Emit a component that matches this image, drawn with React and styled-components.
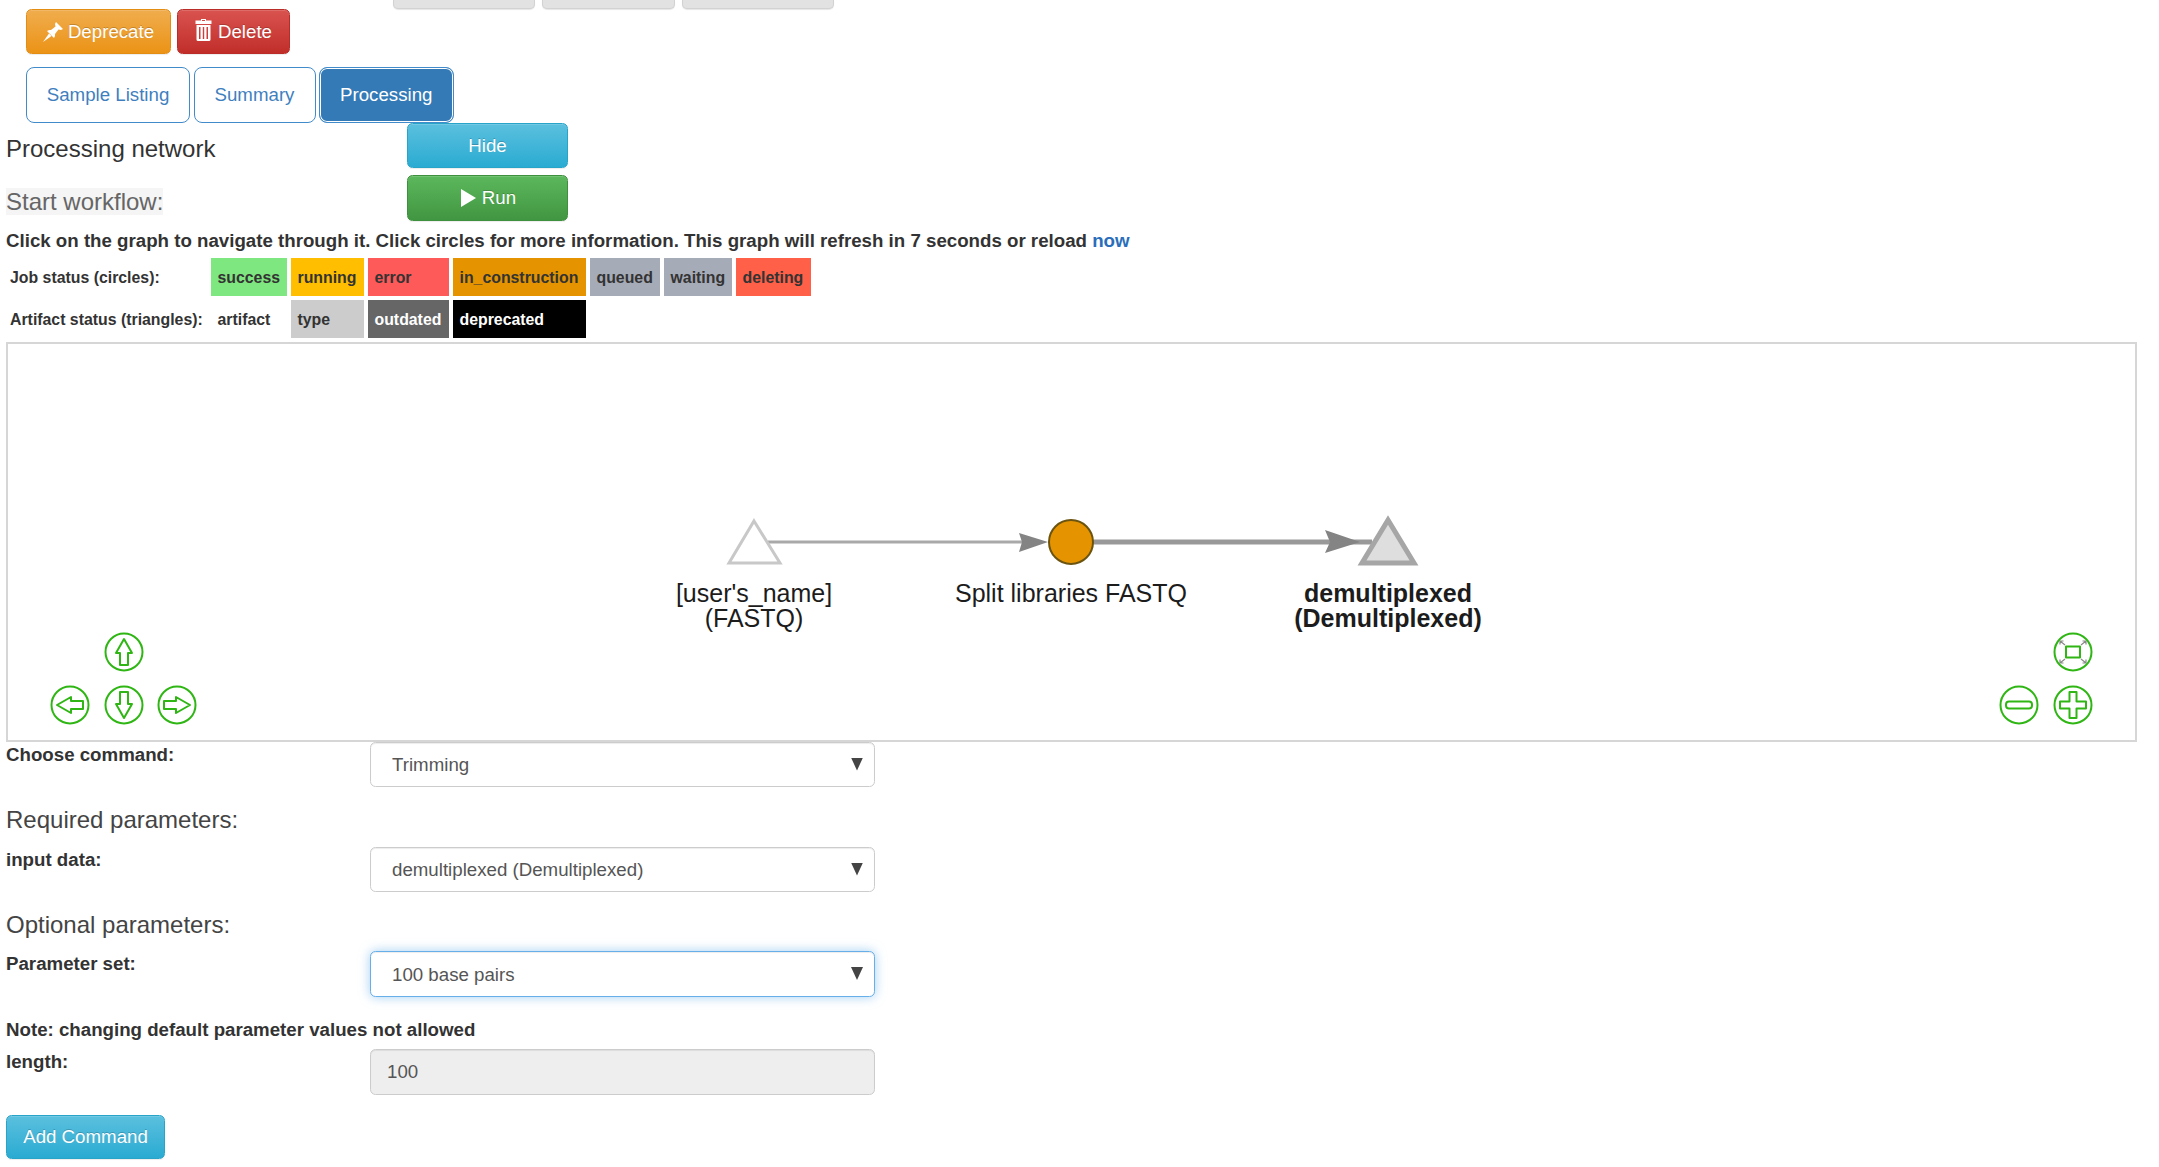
import React from 'react';
import styled, { createGlobalStyle } from 'styled-components';

const GlobalStyle = createGlobalStyle`
  * { box-sizing: border-box; }
  html, body { margin: 0; padding: 0; background: #fff; }
  body {
    font-family: "Liberation Sans", Arial, sans-serif;
    font-size: 18.7px;
    color: #333;
  }
`;

const gradients = {
  warning: ['#f0ad4e', '#eb9316', '#e38d13'],
  danger: ['#d9534f', '#c12e2a', '#b92c28'],
  info: ['#5bc0de', '#2aabd2', '#28a4c9'],
  success: ['#5cb85c', '#419641', '#3e8f3e'],
};

const StubRow = styled.div`
  display: flex;
  gap: 7px;
  height: 9px;
  padding-left: 393px;
`;

const Stub = styled.div`
  width: ${(p) => p.$w}px;
  height: 9px;
  background: #e2e2e2;
  border: 1px solid #d2d2d2;
  border-top: 0;
  border-radius: 0 0 5px 5px;
  box-shadow: 0 1px 1px rgba(0, 0, 0, 0.1);
`;

const Toolbar = styled.div`
  display: flex;
  gap: 6px;
  margin-left: 26px;
`;

const Button = styled.button`
  display: flex;
  align-items: center;
  justify-content: center;
  gap: ${(p) => p.$gap ?? 6}px;
  width: ${(p) => p.$w}px;
  height: ${(p) => p.$h || 45}px;
  padding: 0 0 0 ${(p) => p.$inset || 0}px;
  font: inherit;
  color: #fff;
  text-shadow: 0 -1px 0 rgba(0, 0, 0, 0.2);
  background: linear-gradient(${(p) => gradients[p.$kind][0]}, ${(p) => gradients[p.$kind][1]});
  border: 1px solid ${(p) => gradients[p.$kind][2]};
  border-radius: 5.5px;
  box-shadow: inset 0 1px 0 rgba(255, 255, 255, 0.15), 0 1px 1px rgba(0, 0, 0, 0.075);
`;

const Tabs = styled.div`
  display: flex;
  gap: 3.5px;
  margin: 13px 0 0 26px;
`;

const Tab = styled.a`
  display: flex;
  align-items: center;
  justify-content: center;
  width: ${(p) => p.$w}px;
  height: 56px;
  color: ${(p) => (p.$active ? '#fff' : '#3f7fbe')};
  background: ${(p) => (p.$active ? '#337ab7' : '#fff')};
  border: 1.4px solid #428bca;
  border-radius: 8px;
  box-shadow: ${(p) => (p.$active ? 'inset 0 0 0 1px #fff' : 'none')};
`;

const WorkflowGrid = styled.div`
  display: grid;
  grid-template-columns: 401px 161px;
  grid-template-rows: 45px 46px;
  row-gap: 7px;
  align-items: center;
  padding-left: 6px;
`;

const SectionTitle = styled.div`
  font-size: 24px;
  line-height: 30px;
  color: #333;
`;

const NetworkTitle = styled(SectionTitle)`
  margin-top: 6px;
`;

const StartTitle = styled(SectionTitle)`
  justify-self: start;
  margin-top: 6px;
  line-height: 27px;
  color: #666;
  background: #f5f5f5;
`;

const Instruction = styled.div`
  margin-top: 6px;
  padding-left: 6px;
  font-weight: bold;
  line-height: 27px;

  a {
    color: #2a6ebb;
  }
`;

const Legend = styled.div`
  display: grid;
  grid-template-columns: 201px 76px 73px 81px 133px 70px 68px 75px;
  grid-auto-rows: 38px;
  gap: 4px;
  margin: 4px 0 0 6px;
  font-size: 15.85px;
  font-weight: bold;
`;

const LegendCell = styled.div`
  display: flex;
  align-items: center;
  padding: 1px 0 0 ${(p) => p.$pad ?? 6.5}px;
  white-space: nowrap;
  color: ${(p) => p.$color || '#333'};
  background: ${(p) => p.$bg || 'transparent'};
`;

const GraphBox = styled.div`
  position: relative;
  width: 2131px;
  height: 400px;
  margin: 4px 0 0 6px;
  border: 2px solid #d6d6d6;
`;

const GraphCanvas = styled.svg`
  display: block;
  width: 100%;
  height: 100%;
  font-family: "Liberation Sans", Arial, sans-serif;
  font-size: 25px;
  fill: #1c1c1c;
`;

const NavButton = styled.svg`
  position: absolute;
  left: ${(p) => p.$x - 28}px;
  top: ${(p) => p.$y - 364}px;
  width: 40px;
  height: 40px;
  fill: none;
  stroke: #2fb614;
  stroke-width: 2;
  stroke-linejoin: round;
`;

const FieldRow = styled.div`
  display: grid;
  grid-template-columns: 364px 505px;
  margin-top: ${(p) => p.$top || 0}px;
  padding-left: 6px;
`;

const FieldLabel = styled.label`
  font-weight: bold;
  line-height: 25px;
`;

const SelectWrap = styled.div`
  position: relative;

  &::after {
    content: '';
    position: absolute;
    top: 50%;
    right: 12px;
    width: 12px;
    height: 13px;
    margin-top: -7px;
    background: #444;
    clip-path: polygon(0 0, 100% 0, 50% 100%);
    pointer-events: none;
  }
`;

const Select = styled.select`
  display: block;
  width: 100%;
  height: ${(p) => (p.$focus ? 46 : 45)}px;
  padding: 0 30px 0 21px;
  font: inherit;
  color: #555;
  background: #fff;
  border: 1.4px solid ${(p) => (p.$focus ? '#66afe9' : '#ccc')};
  border-radius: 5.5px;
  appearance: none;
  box-shadow: ${(p) =>
    p.$focus
      ? 'inset 0 1px 1px rgba(0,0,0,.075), 0 0 11px rgba(102,175,233,.6)'
      : 'inset 0 1px 1px rgba(0,0,0,.075)'};
`;

const DisabledInput = styled.input`
  display: block;
  width: 100%;
  height: 46px;
  padding: 0 16px;
  font: inherit;
  color: #555;
  background: #eee;
  border: 1.4px solid #ccc;
  border-radius: 5.5px;
  box-shadow: inset 0 1px 1px rgba(0, 0, 0, 0.075);
`;

const ParamTitle = styled(SectionTitle)`
  margin-top: ${(p) => p.$top}px;
  padding-left: 6px;
  color: #444;
`;

const Note = styled.div`
  margin-top: 19px;
  padding-left: 6px;
  font-weight: bold;
  line-height: 28px;
`;

const AddRow = styled.div`
  margin: 20px 0 8px 6px;
`;

const PinIcon = () => (
  <svg width="20" height="22" viewBox="0 0 20 20" fill="#fff">
    <path d="M13 0L20 7L18 8L15.5 7.5L12 12Q12.5 14 11 16L4 9Q6 7.5 8 8L12.5 4.5L12 2Z" />
    <path d="M6 11.5L0 20L8.5 14Z" />
  </svg>
);

const TrashIcon = () => (
  <svg width="17" height="22" viewBox="0 0 17 22" fill="#fff" style={{ marginTop: -3 }}>
    <path d="M6 0h5v1.5h5.5V5H.5V1.5H6zM7 1v1h3V1z" fillRule="evenodd" />
    <path
      d="M1.5 6h14v14.5q0 1.5-1.5 1.5H3q-1.5 0-1.5-1.5zM4 8v12h1.5V8zM7.8 8v12h1.4V8zM11.5 8v12H13V8z"
      fillRule="evenodd"
    />
  </svg>
);

const PlayIcon = () => (
  <svg width="15" height="18" viewBox="0 0 15 18" fill="#fff">
    <path d="M0 0L15 9L0 18Z" />
  </svg>
);

const arrowPath = 'M20 7L28 21H24V33H16V21H12Z';

const ArrowNav = ({ x, y, angle }) => (
  <NavButton $x={x} $y={y} viewBox="0 0 40 40">
    <circle cx="20" cy="20" r="18.5" />
    <path d={arrowPath} transform={`rotate(${angle} 20 20)`} />
  </NavButton>
);

const jobCells = [
  ['success', '#7fe77f'],
  ['running', '#ffbf00'],
  ['error', '#ff5a5a'],
  ['in_construction', '#e59400'],
  ['queued', '#a6abb8'],
  ['waiting', '#a6abb8'],
  ['deleting', '#ff6047'],
];

function App() {
  return (
    <>
      <GlobalStyle />
      <StubRow>
        <Stub $w={142} />
        <Stub $w={133} />
        <Stub $w={152} />
      </StubRow>
      <Toolbar>
        <Button $kind="warning" $w={145} $gap={5}>
          <PinIcon />
          Deprecate
        </Button>
        <Button $kind="danger" $w={113}>
          <TrashIcon />
          Delete
        </Button>
      </Toolbar>
      <Tabs>
        <Tab $w={164}>Sample Listing</Tab>
        <Tab $w={122}>Summary</Tab>
        <Tab $w={134.5} $active>
          Processing
        </Tab>
      </Tabs>
      <WorkflowGrid>
        <NetworkTitle>Processing network</NetworkTitle>
        <Button $kind="info" $w={161}>
          Hide
        </Button>
        <StartTitle>Start workflow:</StartTitle>
        <Button $kind="success" $w={161} $h={46} $inset={2}>
          <PlayIcon />
          Run
        </Button>
      </WorkflowGrid>
      <Instruction>
        Click on the graph to navigate through it. Click circles for more information. This graph will
        refresh in 7 seconds or reload <a>now</a>
      </Instruction>
      <Legend>
        <LegendCell $pad={4}>Job status (circles):</LegendCell>
        {jobCells.map(([name, bg]) => (
          <LegendCell key={name} $bg={bg}>
            {name}
          </LegendCell>
        ))}
        <LegendCell $pad={4}>Artifact status (triangles):</LegendCell>
        <LegendCell>artifact</LegendCell>
        <LegendCell $bg="#cccccc">type</LegendCell>
        <LegendCell $bg="#666666" $color="#fff">
          outdated
        </LegendCell>
        <LegendCell $bg="#000000" $color="#fff">
          deprecated
        </LegendCell>
      </Legend>
      <GraphBox>
        <GraphCanvas viewBox="8 344 2127 396">
          <path d="M768 542H1022" stroke="#a9a9a9" strokeWidth="3" fill="none" />
          <path d="M1048 542L1019 533L1022 542L1019 552Z" fill="#848484" />
          <path d="M1093 542H1372" stroke="#999" strokeWidth="5" fill="none" />
          <path d="M1360 542L1325 530L1330 542L1325 553Z" fill="#848484" />
          <path d="M754 521L780 563H729Z" fill="#fff" stroke="#c8c8c8" strokeWidth="3" />
          <circle cx="1071" cy="542" r="22" fill="#e59400" stroke="#6b5310" strokeWidth="2" />
          <path d="M1388 520L1414 563H1362Z" fill="#dedede" stroke="#a6a6a6" strokeWidth="5" />
          <text x="754" y="602" textAnchor="middle">[user's_name]</text>
          <text x="754" y="627" textAnchor="middle">(FASTQ)</text>
          <text x="1071" y="602" textAnchor="middle">Split libraries FASTQ</text>
          <text x="1388" y="602" textAnchor="middle" fontWeight="bold">demultiplexed</text>
          <text x="1388" y="627" textAnchor="middle" fontWeight="bold">(Demultiplexed)</text>
        </GraphCanvas>
        <ArrowNav x={124} y={652} angle={0} />
        <ArrowNav x={70} y={705} angle={270} />
        <ArrowNav x={124} y={705} angle={180} />
        <ArrowNav x={177} y={705} angle={90} />
        <NavButton $x={2073} $y={652} viewBox="0 0 40 40">
          <circle cx="20" cy="20" r="18.5" />
          <rect x="13" y="14.5" width="14" height="11" />
          <path
            d="M7 9L12 13M7 9h3.5M7 9v3.5M33 9L28 13M33 9h-3.5M33 9v3.5M7 31L12 27M7 31h3.5M7 31v-3.5M33 31L28 27M33 31h-3.5M33 31v-3.5"
            stroke="#888"
            strokeWidth="1.2"
          />
        </NavButton>
        <NavButton $x={2019} $y={705} viewBox="0 0 40 40">
          <circle cx="20" cy="20" r="18.5" />
          <rect x="7" y="16.5" width="26" height="7" rx="3" />
        </NavButton>
        <NavButton $x={2073} $y={705} viewBox="0 0 40 40">
          <circle cx="20" cy="20" r="18.5" />
          <path d="M16.5 7H23.5V16.5H33V23.5H23.5V33H16.5V23.5H7V16.5H16.5Z" />
        </NavButton>
      </GraphBox>
      <FieldRow>
        <FieldLabel>Choose command:</FieldLabel>
        <SelectWrap>
          <Select defaultValue="Trimming">
            <option>Trimming</option>
          </Select>
        </SelectWrap>
      </FieldRow>
      <ParamTitle $top={18}>Required parameters:</ParamTitle>
      <FieldRow $top={12}>
        <FieldLabel>input data:</FieldLabel>
        <SelectWrap>
          <Select defaultValue="demultiplexed (Demultiplexed)">
            <option>demultiplexed (Demultiplexed)</option>
          </Select>
        </SelectWrap>
      </FieldRow>
      <ParamTitle $top={18}>Optional parameters:</ParamTitle>
      <FieldRow $top={11}>
        <FieldLabel>Parameter set:</FieldLabel>
        <SelectWrap>
          <Select $focus defaultValue="100 base pairs">
            <option>100 base pairs</option>
          </Select>
        </SelectWrap>
      </FieldRow>
      <Note>Note: changing default parameter values not allowed</Note>
      <FieldRow $top={5}>
        <FieldLabel>length:</FieldLabel>
        <DisabledInput disabled value="100" readOnly />
      </FieldRow>
      <AddRow>
        <Button $kind="info" $w={159} $h={44}>
          Add Command
        </Button>
      </AddRow>
    </>
  );
}

export default App;
